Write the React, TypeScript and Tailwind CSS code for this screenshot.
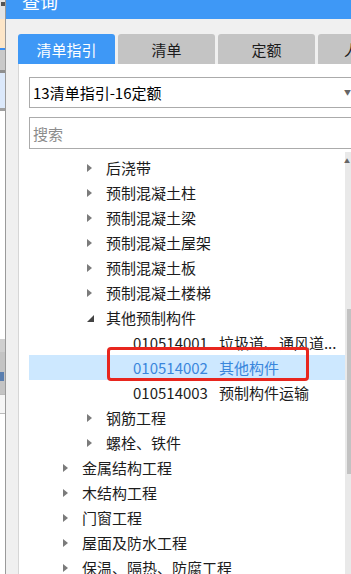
import React from "react";

type Node = {
  level: 1 | 2 | 3;
  label: string;
  code?: string;
  state?: "closed" | "open";
  selected?: boolean;
};

const TREE: Node[] = [
  { level: 2, label: "后浇带", state: "closed" },
  { level: 2, label: "预制混凝土柱", state: "closed" },
  { level: 2, label: "预制混凝土梁", state: "closed" },
  { level: 2, label: "预制混凝土屋架", state: "closed" },
  { level: 2, label: "预制混凝土板", state: "closed" },
  { level: 2, label: "预制混凝土楼梯", state: "closed" },
  { level: 2, label: "其他预制构件", state: "open" },
  { level: 3, code: "010514001", label: "垃圾道、通风道..." },
  { level: 3, code: "010514002", label: "其他构件", selected: true },
  { level: 3, code: "010514003", label: "预制构件运输" },
  { level: 2, label: "钢筋工程", state: "closed" },
  { level: 2, label: "螺栓、铁件", state: "closed" },
  { level: 1, label: "金属结构工程", state: "closed" },
  { level: 1, label: "木结构工程", state: "closed" },
  { level: 1, label: "门窗工程", state: "closed" },
  { level: 1, label: "屋面及防水工程", state: "closed" },
  { level: 1, label: "保温、隔热、防腐工程", state: "closed" },
];

const FONT = { fontFamily: '"Noto Sans CJK SC", "Noto Sans", sans-serif' };

function Arrow({ open }: { open: boolean }) {
  if (open) {
    return (
      <svg width="7" height="7" viewBox="0 0 7 7" className="mt-[1px]">
        <path d="M7 0 L7 7 L0 7 Z" fill="#444" />
      </svg>
    );
  }
  return (
    <svg width="5" height="8" viewBox="0 0 5 8">
      <path d="M0 0 L5 4 L0 8 Z" fill="#7b7b7b" />
    </svg>
  );
}

function TreeRow({ node }: { node: Node }) {
  const pad =
    node.level === 1 ? "pl-[34px]" : node.level === 2 ? "pl-[58px]" : "pl-[104px]";
  return (
    <div
      className={`relative flex h-[25px] items-center ${pad} ${
        node.selected ? "bg-[#cde8ff] text-[#3a86dc]" : "text-[#1c1c1c]"
      }`}
    >
      {node.state && (
        <span className="flex w-[19px] shrink-0 items-center">
          <Arrow open={node.state === "open"} />
        </span>
      )}
      {node.code && <span className="mr-[11px]">{node.code}</span>}
      <span className="whitespace-nowrap">{node.label}</span>
      {node.selected && (
        <div className="pointer-events-none absolute left-[78px] top-[-8px] h-[34px] w-[202px] rounded-[4px] border-[3px] border-[#e8261e]" />
      )}
    </div>
  );
}

function Tab({ label, active }: { label: string; active?: boolean }) {
  return (
    <div
      className={`flex h-[30px] w-[97px] shrink-0 items-center justify-center rounded-t-[3px] whitespace-nowrap ${
        active ? "bg-[#3e98f6] text-white" : "bg-[#c4c4c4] text-[#1c1c1c]"
      }`}
    >
      {label}
    </div>
  );
}

export default function App() {
  return (
    <div
      className="flex h-[574px] w-[351px] overflow-hidden bg-white text-[15px] leading-none"
      style={FONT}
    >
      {/* background window sliver */}
      <div className="flex w-[5px] shrink-0 flex-col bg-white">
        <div className="h-[19px] bg-[#e4e4e4]">
          <div className="ml-[1px] mt-[2px] h-[4px] w-[4px] bg-[#555]" />
        </div>
        <div className="h-[29px] bg-[#fde6c8]" />
        <div className="h-[2px] bg-[#3c8ef0]" />
        <div className="h-[20px] bg-[#c9c9c9]" />
        <div className="h-[3px] bg-[#8f8f8f]" />
        <div className="h-[35px] bg-[#dce9fb]" />
        <div className="h-[3px] bg-[#a0a0a0]" />
        <div className="h-[228px] bg-white" />
        <div className="h-[13px] bg-[#cfcfcf]" />
        <div className="h-[42px] bg-[#c4c4c4] pt-[20px]">
          <div className="h-[9px] w-[4px] bg-[#5a7fb0]" />
        </div>
        <div className="h-[20px] border-y border-[#bbb] bg-[#f6f6f6]" />
      </div>
      <div className="w-[1px] shrink-0 bg-[#9a9a9a]" />

      {/* dialog */}
      <div className="flex min-w-0 flex-1 flex-col">
        <div className="h-[19px] shrink-0 overflow-hidden bg-[#3e98f6] pl-[16px]">
          <div className="mt-[-8px] text-[18px] leading-[18px] text-white">查询</div>
        </div>
        <div className="flex flex-1 flex-col bg-[#f0f0f0] pl-[12px] pt-[15px]">
          <div className="flex gap-[3px]">
            <Tab label="清单指引" active />
            <Tab label="清单" />
            <Tab label="定额" />
            <Tab label="人材机" />
          </div>
          <div className="flex flex-1 flex-col border-l border-[#d6d6d6] bg-white pl-[10px]">
            <div className="mt-[13px] flex h-[31px] w-[322px] items-center justify-between border border-r-0 border-[#ababab] pl-[3px]">
              <span>13清单指引-16定额</span>
              <span className="text-[7px] text-[#666]">▼</span>
            </div>
            <div className="mt-[9px] flex h-[32px] w-[322px] items-center border border-r-0 border-[#ababab] pl-[3px] text-[#8c8c8c]">
              搜索
            </div>
            <div className="mt-[3px] flex flex-1">
              <div className="flex w-[316px] shrink-0 flex-col pt-[3px]">
                {TREE.map((n, i) => (
                  <TreeRow key={i} node={n} />
                ))}
              </div>
              <div className="flex w-[6px] flex-col items-end bg-[#e9e9e9] pt-[6px]">
                <span className="mr-[1px] text-[6px] leading-none text-[#666]">▲</span>
                <div className="mt-[145px] h-[165px] w-[4px] bg-[#c2c2c2]" />
              </div>
            </div>
          </div>
        </div>
      </div>
    </div>
  );
}
